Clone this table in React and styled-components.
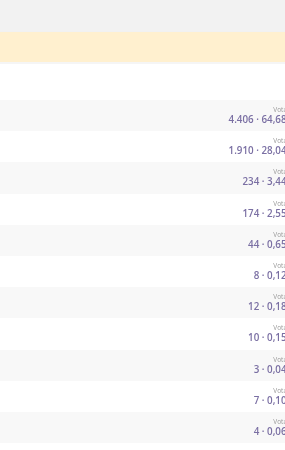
import React from "react";
import styled, { createGlobalStyle } from "styled-components";

const Global = createGlobalStyle`
  html, body { margin: 0; padding: 0; background: #ffffff; overflow: hidden; }
  body { font-family: "Open Sans", "Liberation Sans", sans-serif; }
`;

const Page = styled.div`
  width: 295px;
  display: flex;
  flex-direction: column;
  filter: blur(0.35px);
`;

const TopBar = styled.div`
  height: 32px;
  background: #f2f2f2;
`;

const Notice = styled.div`
  height: 30px;
  background: #fff0cf;
  box-shadow: 0 1px 3px rgba(0,0,0,0.04);
`;

const Divider = styled.div`
  height: 2px;
  background: #f5f5f5;
`;

const Header = styled.div`
  height: 36px;
  background: #ffffff;
`;

const List = styled.div`
  display: flex;
  flex-direction: column;
`;

const Row = styled.div`
  height: 31.2px;
  box-sizing: border-box;
  background: ${(p) => (p.$alt ? "#f8f8f8" : "#ffffff")};
  display: flex;
  flex-direction: column;
  align-items: flex-end;
  justify-content: center;
  padding-top: 1px;
`;

const Label = styled.div`
  font-size: 6.5px;
  line-height: 8px;
  color: #9a9a9a;
`;

const Value = styled.div`
  font-size: 9.8px;
  line-height: 12px;
  font-weight: 600;
  color: #7a6fa3;
  white-space: nowrap;
`;

const rows = [
  ["4.406", "64,68%"],
  ["1.910", "28,04%"],
  ["234", "3,44%"],
  ["174", "2,55%"],
  ["44", "0,65%"],
  ["8", "0,12%"],
  ["12", "0,18%"],
  ["10", "0,15%"],
  ["3", "0,04%"],
  ["7", "0,10%"],
  ["4", "0,06%"],
];

export default function App() {
  return (
    <>
      <Global />
      <Page>
        <TopBar />
        <Notice />
        <Divider />
        <Header />
        <List>
          {rows.map(([n, p], i) => (
            <Row key={i} $alt={i % 2 === 0}>
              <Label>Votanti</Label>
              <Value>{n} · {p}</Value>
            </Row>
          ))}
        </List>
      </Page>
    </>
  );
}
